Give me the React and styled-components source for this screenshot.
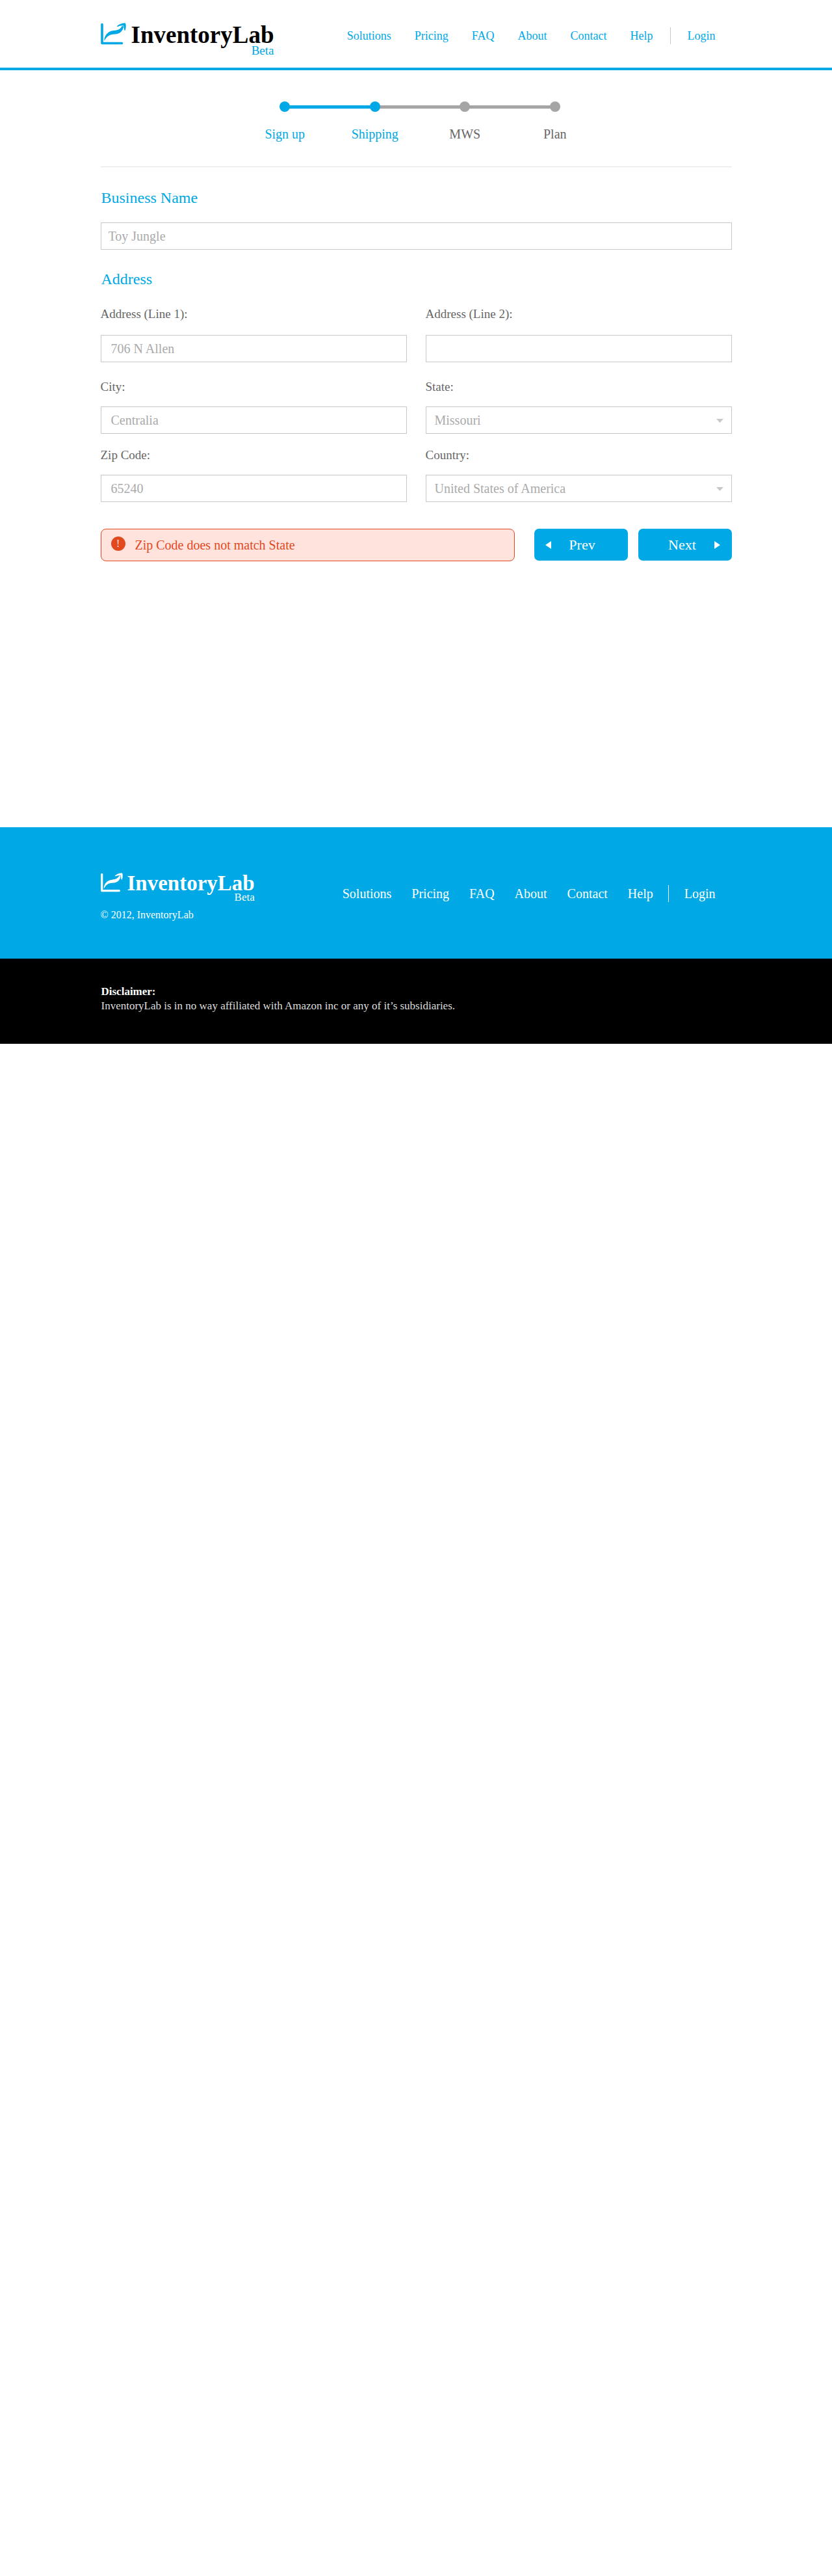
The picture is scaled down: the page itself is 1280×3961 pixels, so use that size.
import React from "react";
import styled, { createGlobalStyle } from "styled-components";

const BLUE = "#00a8e6";

const GlobalStyle = createGlobalStyle`
  *, *::before, *::after { box-sizing: border-box; }
  body {
    margin: 0;
    background: #fff;
    color: #666;
    font-family: "Liberation Serif", "Times New Roman", serif;
    font-size: 20px;
  }
  h1, h2, p { margin: 0; font-weight: 400; }
  input, select, button { font-family: inherit; }
`;

const Container = styled.div`
  width: 100%;
  max-width: 1011px;
  margin: 0 auto;
  padding: 0 20px;
`;

const Header = styled.header`
  border-bottom: 4px solid ${BLUE};
`;

const HeaderRow = styled(Container)`
  display: flex;
  justify-content: space-between;
  align-items: flex-start;
  padding-top: 35px;
  height: 104px;
`;

const LogoLink = styled.a`
  display: grid;
  grid-template-columns: auto auto;
  justify-content: start;
  column-gap: ${(p) => (p.$small ? 7 : 8)}px;
  color: ${(p) => (p.$small ? "#fff" : "#000")};
  text-decoration: none;
`;

const LogoMark = styled.svg`
  display: block;
  width: ${(p) => (p.$small ? 34 : 39)}px;
  height: ${(p) => (p.$small ? 30 : 34)}px;
  color: ${(p) => (p.$small ? "#fff" : BLUE)};
`;

const LogoName = styled.span`
  font-size: ${(p) => (p.$small ? 33 : 37)}px;
  line-height: ${(p) => (p.$small ? 33 : 38)}px;
  font-weight: 700;
`;

const LogoTag = styled.span`
  grid-column: 2;
  justify-self: end;
  font-size: ${(p) => (p.$small ? 17 : 19)}px;
  line-height: 10px;
  color: ${(p) => (p.$small ? "#fff" : BLUE)};
`;

const Nav = styled.nav`
  display: flex;
  align-items: center;
  gap: ${(p) => (p.$footer ? 31 : 36)}px;
  padding: 7px 25px 0 0;
`;

const NavLink = styled.a`
  color: ${(p) => (p.$footer ? "#fff" : BLUE)};
  font-size: ${(p) => (p.$footer ? 20 : 18)}px;
  line-height: 26px;
  text-decoration: none;
`;

const LoginLink = styled(NavLink)`
  margin-left: ${(p) => (p.$footer ? -8 : -10)}px;
  padding-left: ${(p) => (p.$footer ? 24 : 26)}px;
  border-left: 1px solid ${(p) => (p.$footer ? "#fff" : "#c8c8c8")};
`;

const Steps = styled.ol`
  display: grid;
  grid-template-columns: repeat(4, 1fr);
  width: 100%;
  max-width: 554px;
  margin: 0 auto;
  padding: 0;
  list-style: none;
`;

const Step = styled.li`
  position: relative;
  display: flex;
  flex-direction: column;
  align-items: center;
  gap: 22px;
  color: ${(p) => (p.$done ? BLUE : "#666")};
  line-height: 24px;

  &:not(:first-child)::after {
    content: "";
    position: absolute;
    top: 6px;
    right: 50%;
    width: 100%;
    height: 5px;
    background: ${(p) => (p.$done ? BLUE : "#a5a5a5")};
  }
`;

const Dot = styled.span`
  position: relative;
  z-index: 1;
  width: 16px;
  height: 16px;
  border-radius: 50%;
  background: ${(p) => (p.$done ? BLUE : "#a5a5a5")};
`;

const StepsBar = styled.div`
  padding: 48px 0 38px 12px;
  border-bottom: 1px solid #e3e3e3;
`;

const Heading = styled.h2`
  display: block;
  padding-left: 1px;
  color: ${BLUE};
  font-size: 24px;
  line-height: 28px;
`;

const Form = styled.form`
  padding-top: 33px;
`;

const BusinessField = styled.div`
  display: grid;
  gap: 24px;
  margin-bottom: 31px;
`;

const FieldGrid = styled.div`
  display: grid;
  grid-template-columns: 1fr 1fr;
  column-gap: 29px;
  row-gap: 22px;
  margin-top: 29px;
`;

const Field = styled.div`
  display: grid;
  gap: ${(p) => (p.$street ? 21 : 19)}px;
  margin-bottom: ${(p) => (p.$street ? 5 : 0)}px;
`;

const Label = styled.label`
  font-size: 19px;
  line-height: 22px;
`;

const Input = styled.input`
  width: 100%;
  height: 42px;
  padding: 0 ${(p) => (p.$tight ? 11 : 15)}px;
  border: 1px solid #c8c8c8;
  border-radius: 0;
  background: #fff;
  color: #aaa;
  font-size: 20px;
`;

const SelectWrap = styled.div`
  position: relative;
`;

const Select = styled.select`
  display: block;
  width: 100%;
  height: 42px;
  padding: 0 40px 0 13px;
  appearance: none;
  border: 1px solid #c8c8c8;
  border-radius: 0;
  background: #fff;
  color: #aaa;
  font-size: 20px;
`;

const SelectArrow = styled.svg`
  position: absolute;
  top: 19px;
  right: 13px;
  width: 11px;
  height: 6px;
  fill: #c8c8c8;
  pointer-events: none;
`;

const Actions = styled.div`
  display: grid;
  grid-template-columns: 1fr 144px 144px;
  column-gap: 16px;
  margin-top: 41px;
`;

const Alert = styled.div`
  display: flex;
  align-items: center;
  gap: 15px;
  height: 50px;
  margin-right: 14px;
  padding-left: 15px;
  border: 1px solid #e2491f;
  border-radius: 8px;
  background: #ffe3dc;
  color: #e2491f;
`;

const AlertMark = styled.span`
  display: grid;
  place-items: center;
  width: 22px;
  height: 22px;
  margin-bottom: 4px;
  border-radius: 50%;
  background: #e2491f;
  color: #ffe3dc;
  font-size: 17px;
  line-height: 22px;
`;

const Button = styled.button`
  display: grid;
  grid-template-columns: 10px 1fr 10px;
  align-items: center;
  height: 49px;
  padding: 0 17px;
  border: 0;
  border-radius: 7px;
  background: ${BLUE};
  color: #fff;
  font-size: 22px;
  cursor: pointer;
`;

const ButtonText = styled.span`
  grid-column: 2;
  padding-left: ${(p) => (p.$next ? 0 : 4)}px;
  padding-right: ${(p) => (p.$next ? 8 : 0)}px;
`;

const ButtonArrow = styled.svg`
  width: 9px;
  height: 12px;
  fill: currentColor;
`;

const Footer = styled.footer`
  margin-top: 409px;
  background: ${BLUE};
  color: #fff;
`;

const FooterRow = styled(Container)`
  display: flex;
  justify-content: space-between;
  align-items: flex-start;
  height: 202px;
  padding-top: 70px;
`;

const FooterNavSlot = styled.div`
  padding-top: 12px;
`;

const Copyright = styled.p`
  margin-top: 12px;
  font-size: 16px;
  line-height: 20px;
`;

const Disclaimer = styled.section`
  padding: 40px 0 47px;
  background: #000;
  color: #ddd;
  font-size: 17px;
  line-height: 22px;
`;

const DisclaimerTitle = styled.strong`
  display: block;
  color: #fff;
`;

const DisclaimerText = styled.div`
  padding-left: 1px;
`;

const LINKS = ["Solutions", "Pricing", "FAQ", "About", "Contact", "Help"];

const STEPS = [
  { name: "Sign up", done: true },
  { name: "Shipping", done: true },
  { name: "MWS", done: false },
  { name: "Plan", done: false },
];

function Logo({ small }) {
  return (
    <LogoLink href="#" $small={small}>
      <LogoMark $small={small} viewBox="0 0 39 34" aria-hidden="true">
        <path
          d="M2 2.500V31.500H32.500"
          fill="none"
          stroke="currentColor"
          strokeWidth="3.600"
          strokeLinecap="round"
          strokeLinejoin="round"
        />
        <path
          d="M5.500 28C5 20 11 12.500 20 12C27 11.500 30.500 9.500 33 4.500L35 6C34 13 29.500 17 22 17.500C13 18 9.500 20.500 5.500 28Z"
          fill="currentColor"
        />
        <path
          d="M25 5C29 1.500 34 0 37.800 0.500C39.200 3 39 8 37.500 12C36.500 12 36 11 36 10L35 4.500C32 4 28.500 5 25.500 6.200Z"
          fill="currentColor"
        />
      </LogoMark>
      <LogoName $small={small}>InventoryLab</LogoName>
      <LogoTag $small={small}>Beta</LogoTag>
    </LogoLink>
  );
}

function MainNav({ footer }) {
  return (
    <Nav $footer={footer} aria-label={footer ? "Footer" : "Main"}>
      {LINKS.map((name) => (
        <NavLink key={name} href="#" $footer={footer}>
          {name}
        </NavLink>
      ))}
      <LoginLink href="#" $footer={footer}>
        Login
      </LoginLink>
    </Nav>
  );
}

function TextField({ id, label, value, street }) {
  return (
    <Field $street={street}>
      <Label htmlFor={id}>{label}</Label>
      <Input id={id} type="text" defaultValue={value} />
    </Field>
  );
}

function SelectField({ id, label, value }) {
  return (
    <Field>
      <Label htmlFor={id}>{label}</Label>
      <SelectWrap>
        <Select id={id} defaultValue={value}>
          <option>{value}</option>
        </Select>
        <SelectArrow viewBox="0 0 11 6" aria-hidden="true">
          <path d="M0 0H11L5.500 6Z" />
        </SelectArrow>
      </SelectWrap>
    </Field>
  );
}

export default function App() {
  return (
    <>
      <GlobalStyle />
      <Header>
        <HeaderRow>
          <Logo />
          <MainNav />
        </HeaderRow>
      </Header>
      <Container as="main">
        <StepsBar>
          <Steps>
            {STEPS.map((s) => (
              <Step key={s.name} $done={s.done}>
                <Dot $done={s.done} />
                {s.name}
              </Step>
            ))}
          </Steps>
        </StepsBar>
        <Form onSubmit={(e) => e.preventDefault()}>
          <BusinessField>
            <Heading as="label" htmlFor="business">
              Business Name
            </Heading>
            <Input id="business" type="text" defaultValue="Toy Jungle" $tight />
          </BusinessField>
          <Heading>Address</Heading>
          <FieldGrid>
            <TextField id="line1" label="Address (Line 1):" value="706 N Allen" street />
            <TextField id="line2" label="Address (Line 2):" value="" street />
            <TextField id="city" label="City:" value="Centralia" />
            <SelectField id="state" label="State:" value="Missouri" />
            <TextField id="zip" label="Zip Code:" value="65240" />
            <SelectField id="country" label="Country:" value="United States of America" />
          </FieldGrid>
          <Actions>
            <Alert role="alert">
              <AlertMark aria-hidden="true">!</AlertMark>
              Zip Code does not match State
            </Alert>
            <Button type="button">
              <ButtonArrow viewBox="0 0 9 12" aria-hidden="true">
                <path d="M9 0V12L0 6Z" />
              </ButtonArrow>
              <ButtonText>Prev</ButtonText>
            </Button>
            <Button type="submit">
              <ButtonText $next>Next</ButtonText>
              <ButtonArrow viewBox="0 0 9 12" aria-hidden="true">
                <path d="M0 0V12L9 6Z" />
              </ButtonArrow>
            </Button>
          </Actions>
        </Form>
      </Container>
      <Footer>
        <FooterRow>
          <div>
            <Logo small />
            <Copyright>© 2012, InventoryLab</Copyright>
          </div>
          <FooterNavSlot>
            <MainNav footer />
          </FooterNavSlot>
        </FooterRow>
      </Footer>
      <Disclaimer>
        <Container>
          <DisclaimerText>
            <DisclaimerTitle>Disclaimer:</DisclaimerTitle>
            InventoryLab is in no way affiliated with Amazon inc or any of it’s subsidiaries.
          </DisclaimerText>
        </Container>
      </Disclaimer>
    </>
  );
}
